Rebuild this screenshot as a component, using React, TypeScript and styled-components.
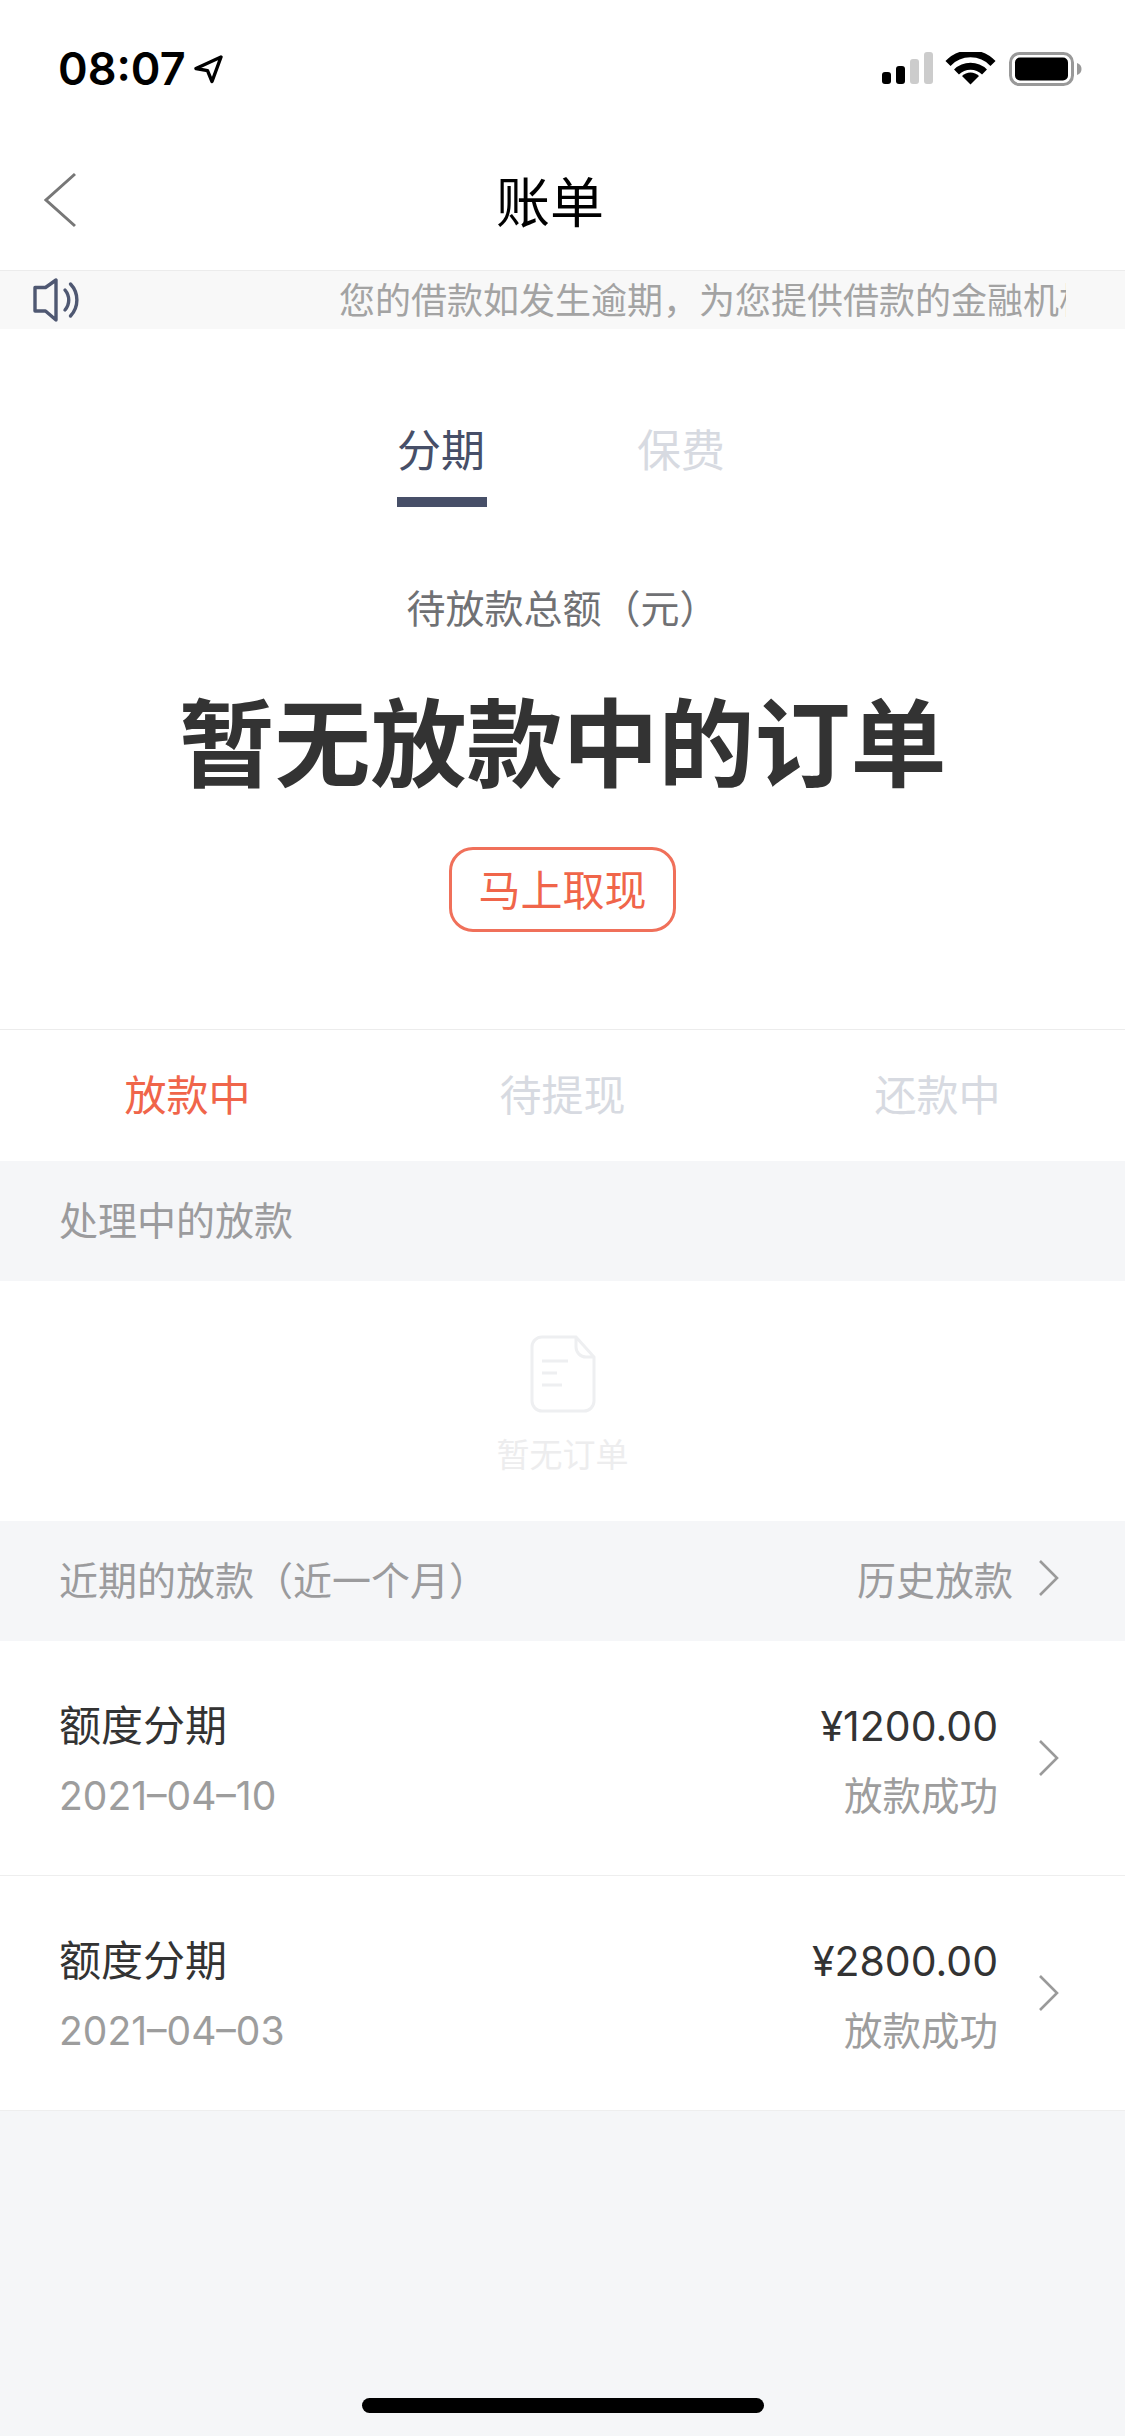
import React from "react";
import styled, { createGlobalStyle } from "styled-components";

const GlobalStyle = createGlobalStyle`
  html, body {
    margin: 0;
    padding: 0;
    background: #f5f6f8;
  }
  * {
    box-sizing: border-box;
  }
`;

const FONT = `"Noto Sans CJK SC", sans-serif`;
const LATIN = `Inter, "Noto Sans CJK SC", sans-serif`;

const Page = styled.div`
  position: relative;
  width: 1125px;
  height: 2436px;
  overflow: hidden;
  background: #f5f6f8;
  font-family: ${FONT};
`;

const Top = styled.div`
  background: #fff;
`;

/* status bar */
const StatusBar = styled.div`
  height: 135px;
  padding: 46px 43px 0 58px;
  display: flex;
  justify-content: space-between;
  align-items: flex-start;
`;

const Clock = styled.div`
  display: flex;
  align-items: flex-start;
  gap: 8px;
  font-family: ${LATIN};
  font-size: 45px;
  line-height: 46px;
  font-weight: 600;
  color: #000;
`;

const ArrowIcon = styled.svg`
  width: 30px;
  height: 30px;
  margin-top: 8px;
`;

const StatusIcons = styled.svg`
  width: 200px;
  height: 36px;
  margin-top: 6px;
`;

/* nav */
const Nav = styled.div`
  height: 135px;
  padding-left: 44px;
  display: grid;
  grid-template-columns: 31px 1fr 75px;
  align-items: center;
  padding-bottom: 6px;
`;

const BackIcon = styled.svg`
  width: 33px;
  height: 56px;
`;

const Title = styled.div`
  text-align: center;
  font-size: 54px;
  line-height: 60px;
  color: #000;
  margin-left: -25px;
`;

/* notice */
const Notice = styled.div`
  height: 59px;
  background: #f8f8f8;
  border-top: 1px solid #ececec;
  display: flex;
  align-items: center;
  padding-left: 33px;
`;

const SpeakerIcon = styled.svg`
  width: 46px;
  height: 46px;
  flex: none;
`;

const NoticeClip = styled.div`
  margin-left: 260px;
  margin-bottom: 5px;
  width: 727px;
  overflow: hidden;
  white-space: nowrap;
  font-size: 36px;
  line-height: 50px;
  color: #a3a3a3;
`;

/* summary */
const Summary = styled.div`
  height: 700px;
  background: #fff;
  display: flex;
  flex-direction: column;
  align-items: center;
`;

const TopTabs = styled.div`
  margin-top: 87px;
  display: flex;
  gap: 150px;
  margin-left: -1px;
`;

const TopTab = styled.div<{ $active?: boolean }>`
  width: 90px;
  height: 91px;
  padding-right: 2px;
  text-align: center;
  font-size: 44px;
  line-height: 64px;
  white-space: nowrap;
  color: ${(p) => (p.$active ? "#474f68" : "#d7dae1")};
  border-bottom: 10px solid ${(p) => (p.$active ? "#474f68" : "transparent")};
`;

const SummaryLabel = styled.div`
  margin-top: 69px;
  font-size: 39px;
  line-height: 60px;
  color: #707174;
`;

const Headline = styled.div`
  margin-top: 37px;
  font-size: 96px;
  line-height: 130px;
  font-weight: 700;
  color: #333;
  white-space: nowrap;
`;

const WithdrawButton = styled.div`
  margin-top: 44px;
  width: 227px;
  height: 85px;
  padding-bottom: 4px;
  border: 3px solid #f0705a;
  border-radius: 24px;
  display: flex;
  align-items: center;
  justify-content: center;
  font-size: 42px;
  color: #f0654a;
`;

/* status tabs */
const StatusTabs = styled.div`
  height: 132px;
  padding-bottom: 6px;
  background: #fff;
  border-top: 1px solid #ececec;
  display: grid;
  grid-template-columns: repeat(3, 1fr);
  align-items: center;
  text-align: center;
`;

const StatusTab = styled.div<{ $active?: boolean }>`
  font-size: 42px;
  line-height: 60px;
  color: ${(p) => (p.$active ? "#f0654a" : "#d7dae1")};
`;

/* section header */
const SectionHeader = styled.div`
  height: 120px;
  padding: 0 65px 6px 59px;
  display: flex;
  justify-content: space-between;
  align-items: center;
  font-size: 39px;
  color: #9b9b9d;
`;

const HistoryLink = styled.div`
  display: flex;
  align-items: center;
  gap: 25px;
`;

const Chevron = styled.svg`
  width: 22px;
  height: 36px;
  flex: none;
`;

/* empty state */
const EmptyState = styled.div`
  height: 240px;
  background: #fff;
  display: flex;
  flex-direction: column;
  align-items: center;
  padding-top: 54px;
`;

const DocIcon = styled.svg`
  width: 66px;
  height: 78px;
`;

const EmptyText = styled.div`
  margin-top: 17px;
  font-size: 33px;
  line-height: 46px;
  color: #ededee;
`;

/* rows */
const Row = styled.div`
  height: 235px;
  background: #fff;
  padding: 0 65px 0 59px;
  display: flex;
  align-items: center;
  border-bottom: 1px solid #eeeeee;

  &:last-of-type {
    border-bottom: none;
  }
`;

const RowLeft = styled.div`
  flex: 1;
`;

const RowRight = styled.div`
  text-align: right;
  margin-right: 40px;
`;

const RowName = styled.div`
  font-size: 42px;
  line-height: 60px;
  color: #333;
`;

const RowDate = styled.div`
  margin-top: 13px;
  margin-bottom: -3px;
  font-family: ${LATIN};
  font-size: 39px;
  line-height: 60px;
  color: #9d9d9d;
`;

const RowAmount = styled.div`
  margin-top: 3px;
  font-family: ${LATIN};
  font-size: 41px;
  line-height: 60px;
  color: #333;
`;

const RowStatus = styled.div`
  margin-top: 7px;
  font-size: 38.500px;
  line-height: 60px;
  color: #9d9d9d;
`;

const HomeIndicator = styled.div`
  position: absolute;
  left: 362px;
  top: 2398px;
  width: 402px;
  height: 15px;
  border-radius: 8px;
  background: #000;
`;

const RightChevron = () => (
  <Chevron viewBox="0 0 22 36">
    <path d="M2 1l17 17L2 35" fill="none" stroke="#9a9a9a" strokeWidth="2.6" />
  </Chevron>
);

const rows = [
  { date: "2021-04-10", amount: "¥1200.00" },
  { date: "2021-04-03", amount: "¥2800.00" },
];

const App = () => {
  return (
    <Page>
      <GlobalStyle />
      <Top>
        <StatusBar>
          <Clock>
            08:07
            <ArrowIcon viewBox="0 0 30 30">
              <path d="M27 3L2 14.500l11.500 2.200L18 27.500z" fill="none" stroke="#000" strokeWidth="3.4" strokeLinejoin="round" />
            </ArrowIcon>
          </Clock>
          <StatusIcons viewBox="0 0 200 36">
            <rect x="0" y="20" width="9" height="12" rx="3" fill="#000" />
            <rect x="14" y="14" width="9" height="18" rx="3" fill="#000" />
            <rect x="28" y="7" width="9" height="25" rx="3" fill="#ccc" />
            <rect x="42" y="0" width="9" height="32" rx="3" fill="#ccc" />
            <path d="M66 11.500a31 31 0 0 1 45 0" fill="none" stroke="#000" strokeWidth="7" />
            <path d="M74.500 20a20 20 0 0 1 28 0" fill="none" stroke="#000" strokeWidth="7" />
            <path d="M88.500 32.500l-8.500-8.500a12 12 0 0 1 17 0z" fill="#000" />
            <rect x="128.500" y="1.500" width="62" height="31" rx="9" fill="none" stroke="#999" strokeWidth="3" />
            <rect x="133" y="5.500" width="53" height="23" rx="5" fill="#000" />
            <path d="M195 11c3 1 4.500 3 4.500 6s-1.500 5-4.500 6z" fill="#999" />
          </StatusIcons>
        </StatusBar>
        <Nav>
          <BackIcon viewBox="0 0 33 56">
            <path d="M31 2L2 28l29 26" fill="none" stroke="#777" strokeWidth="3" />
          </BackIcon>
          <Title>账单</Title>
        </Nav>
      </Top>
      <Notice>
        <SpeakerIcon viewBox="0 0 46 46">
          <path
            d="M2 10.500h10.500L23 3v40l-10.500-9H2z M32 13c5 6 5 14 0 20 M37.500 7c8.500 9 8.500 23 0 32"
            fill="none"
            stroke="#4f5872"
            strokeWidth="3.4"
            strokeLinecap="round"
            strokeLinejoin="round"
          />
        </SpeakerIcon>
        <NoticeClip>您的借款如发生逾期，为您提供借款的金融机构</NoticeClip>
      </Notice>
      <Summary>
        <TopTabs>
          <TopTab $active>分期</TopTab>
          <TopTab>保费</TopTab>
        </TopTabs>
        <SummaryLabel>待放款总额（元）</SummaryLabel>
        <Headline>暂无放款中的订单</Headline>
        <WithdrawButton>马上取现</WithdrawButton>
      </Summary>
      <StatusTabs>
        <StatusTab $active>放款中</StatusTab>
        <StatusTab>待提现</StatusTab>
        <StatusTab>还款中</StatusTab>
      </StatusTabs>
      <SectionHeader>处理中的放款</SectionHeader>
      <EmptyState>
        <DocIcon viewBox="0 0 66 78">
          <path
            d="M12 2h34l18 20v44a10 10 0 0 1-10 10H12A10 10 0 0 1 2 66V12A10 10 0 0 1 12 2z M46 2v10a10 10 0 0 0 10 10h8 M12 26h26 M12 38h15 M12 50h20"
            fill="none"
            stroke="#eeeff1"
            strokeWidth="3"
          />
        </DocIcon>
        <EmptyText>暂无订单</EmptyText>
      </EmptyState>
      <SectionHeader>
        近期的放款（近一个月）
        <HistoryLink>
          历史放款
          <RightChevron />
        </HistoryLink>
      </SectionHeader>
      {rows.map((r) => (
        <Row key={r.date}>
          <RowLeft>
            <RowName>额度分期</RowName>
            <RowDate>{r.date.replace(/-/g, "–")}</RowDate>
          </RowLeft>
          <RowRight>
            <RowAmount>{r.amount}</RowAmount>
            <RowStatus>放款成功</RowStatus>
          </RowRight>
          <RightChevron />
        </Row>
      ))}
      <HomeIndicator />
    </Page>
  );
};

export default App;
